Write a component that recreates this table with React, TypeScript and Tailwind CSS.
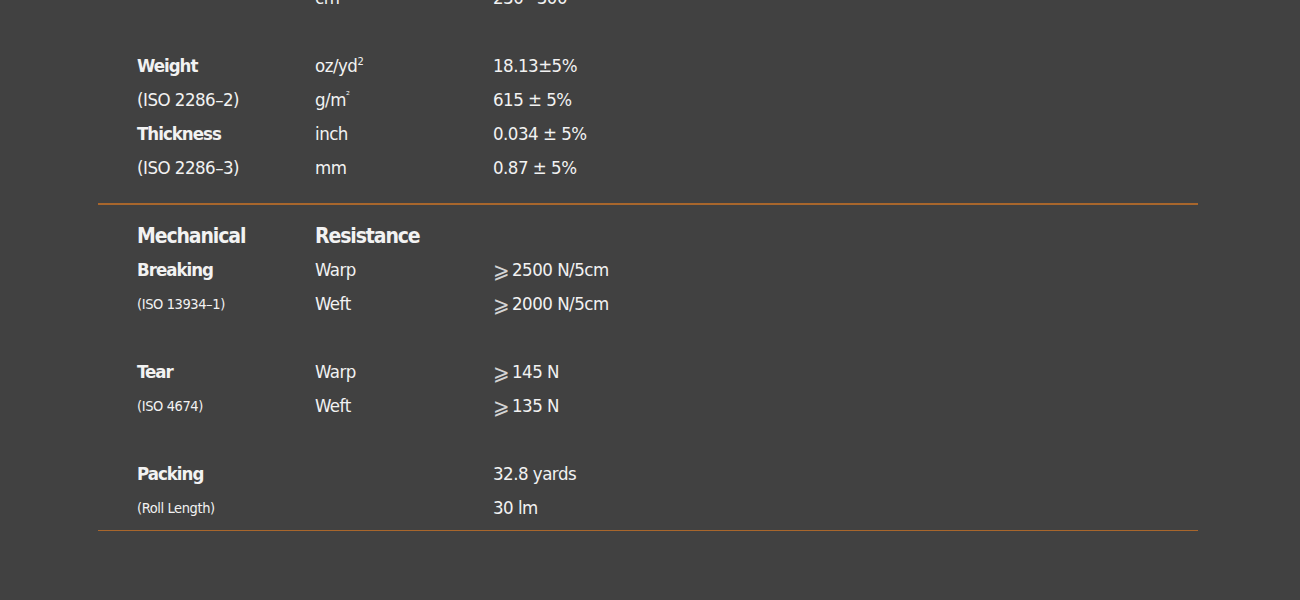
import type { ReactNode } from 'react';

type Row = {
  label?: ReactNode;
  unit?: ReactNode;
  value?: ReactNode;
  strong?: boolean;
  small?: boolean;
};

const font = {
  fontFamily: '"Liberation Sans Narrow", "DejaVu Sans Condensed", "Liberation Sans", sans-serif',
};

const Ge = () => (
  <span className="inline-block w-[19px] text-[22px] font-extralight text-[#d4d4d4] tracking-normal">⩾</span>
);

const Sup = ({ children }: { children: ReactNode }) => (
  <span className="relative -top-[7px] text-[11px] tracking-normal">{children}</span>
);

const physical: Row[] = [
  { unit: 'cm', value: '230~300' },
  {},
  { label: 'Weight', strong: true, unit: <>oz/yd<Sup>2</Sup></>, value: '18.13±5%' },
  { label: '(ISO 2286–2)', unit: <>g/m<Sup>²</Sup></>, value: '615 ± 5%' },
  { label: 'Thickness', strong: true, unit: 'inch', value: '0.034 ± 5%' },
  { label: '(ISO 2286–3)', unit: 'mm', value: '0.87 ± 5%' },
];

const mechanical: Row[] = [
  { label: 'Breaking', strong: true, unit: 'Warp', value: <><Ge />2500 N/5cm</> },
  { label: '(ISO 13934–1)', small: true, unit: 'Weft', value: <><Ge />2000 N/5cm</> },
  {},
  { label: 'Tear', strong: true, unit: 'Warp', value: <><Ge />145 N</> },
  { label: '(ISO 4674)', small: true, unit: 'Weft', value: <><Ge />135 N</> },
  {},
  { label: 'Packing', strong: true, value: '32.8 yards' },
  { label: '(Roll Length)', small: true, value: '30 lm' },
];

function SpecRow({ row }: { row: Row }) {
  return (
    <div className="grid grid-cols-[178px_178px_1fr] h-[34px] items-center text-[18.5px] tracking-[-0.5px] text-[#f2f2f2] leading-none">
      <span
        className={
          row.strong
            ? 'font-bold tracking-[-1px]'
            : row.small
              ? 'text-[14.5px] tracking-[-0.4px]'
              : ''
        }
      >
        {row.label}
      </span>
      <span>{row.unit}</span>
      <span className="flex items-center">{row.value}</span>
    </div>
  );
}

export default function App() {
  return (
    <div className="w-[1300px] h-[600px] overflow-hidden bg-[#414141]" style={font}>
      <div className="w-[1100px] ml-[98px] mt-[-19px]">
        <section className="pl-[39px] pb-[18px]">
          {physical.map((row, i) => (
            <SpecRow key={i} row={row} />
          ))}
        </section>
        <div className="h-[1.5px] bg-[#a8662c]" />
        <section className="pl-[39px] pt-[15px] pb-[4px]">
          <div className="grid grid-cols-[178px_178px_1fr] h-[34px] items-center text-[21px] tracking-[-1.1px] font-bold text-[#f2f2f2] leading-none">
            <span>Mechanical</span>
            <span>Resistance</span>
            <span />
          </div>
          {mechanical.map((row, i) => (
            <SpecRow key={i} row={row} />
          ))}
        </section>
        <div className="h-[1.5px] bg-[#a8662c]" />
      </div>
    </div>
  );
}
